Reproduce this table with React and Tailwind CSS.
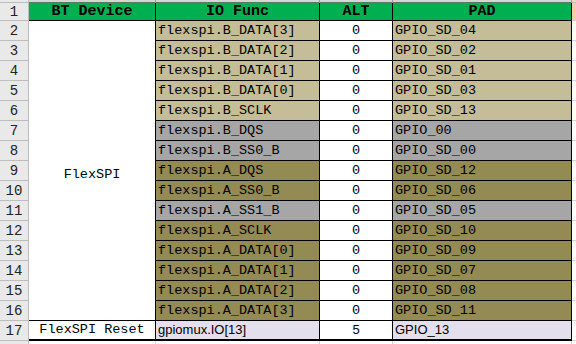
const TAN = "bg-[#c4bd97]";
const GRAY = "bg-[#a6a6a6]";
const OLIVE = "bg-[#948a54]";

const rows = [
  { fn: "flexspi.B_DATA[3]", pad: "GPIO_SD_04", bg: TAN },
  { fn: "flexspi.B_DATA[2]", pad: "GPIO_SD_02", bg: TAN },
  { fn: "flexspi.B_DATA[1]", pad: "GPIO_SD_01", bg: TAN },
  { fn: "flexspi.B_DATA[0]", pad: "GPIO_SD_03", bg: TAN },
  { fn: "flexspi.B_SCLK", pad: "GPIO_SD_13", bg: TAN },
  { fn: "flexspi.B_DQS", pad: "GPIO_00", bg: GRAY },
  { fn: "flexspi.B_SS0_B", pad: "GPIO_SD_00", bg: GRAY },
  { fn: "flexspi.A_DQS", pad: "GPIO_SD_12", bg: OLIVE },
  { fn: "flexspi.A_SS0_B", pad: "GPIO_SD_06", bg: OLIVE },
  { fn: "flexspi.A_SS1_B", pad: "GPIO_SD_05", bg: GRAY },
  { fn: "flexspi.A_SCLK", pad: "GPIO_SD_10", bg: OLIVE },
  { fn: "flexspi.A_DATA[0]", pad: "GPIO_SD_09", bg: OLIVE },
  { fn: "flexspi.A_DATA[1]", pad: "GPIO_SD_07", bg: OLIVE },
  { fn: "flexspi.A_DATA[2]", pad: "GPIO_SD_08", bg: OLIVE },
  { fn: "flexspi.A_DATA[3]", pad: "GPIO_SD_11", bg: OLIVE },
];

const mono = "font-['Liberation_Mono',monospace]";
const sans = "font-['Liberation_Sans',Arial,sans-serif]";

const RowHead = ({ n }) => (
  <div
    className={`flex items-center justify-center border-r border-b border-[#bdbdbd] bg-[#e9e9e9] text-[14px] leading-none text-[#222] ${mono}`}
  >
    {n}
  </div>
);

const Cell = ({ children, className = "" }) => (
  <div
    className={`flex items-end overflow-hidden whitespace-nowrap border-r border-b border-black pb-[1px] text-[13.5px] leading-[16px] text-black ${className}`}
  >
    {children}
  </div>
);

export default function App() {
  const first = rows[0];
  return (
    <div className="h-[344px] w-[576px] overflow-hidden bg-white">
      <div className="grid grid-cols-[29px_127px_164px_73px_179px_4px] grid-rows-[3px_18px_repeat(16,20px)_3px]">
        {/* column header strip */}
        <div className="border-r border-b border-[#bdbdbd] bg-[#e9e9e9]" />
        <div className="border-r border-b border-r-[#9a9a9a] border-b-[#4f7d60] bg-[#d6d6d6]" />
        <div className="border-r border-b border-r-[#9a9a9a] border-b-[#4f7d60] bg-[#d6d6d6]" />
        <div className="border-r border-b border-r-[#9a9a9a] border-b-[#4f7d60] bg-[#d6d6d6]" />
        <div className="border-r border-b border-r-[#9a9a9a] border-b-[#4f7d60] bg-[#d6d6d6]" />
        <div className="border-b border-[#bdbdbd] bg-[#f2d6c2]" />

        {/* row 1 */}
        <RowHead n={1} />
        {["BT Device", "IO Func", "ALT", "PAD"].map((h) => (
          <div
            key={h}
            className={`flex items-center justify-center border-r border-b border-black bg-[#00b050] text-[15px] font-bold leading-none text-black ${mono}`}
          >
            {h}
          </div>
        ))}
        <div className="border-b border-[#d0d0d0] bg-[#f8cbad]" />

        {/* row 2, with the merged FlexSPI cell */}
        <RowHead n={2} />
        <div
          className={`row-span-15 flex items-center justify-center border-r border-b border-black bg-white pt-[10px] text-[13.5px] text-black ${mono}`}
        >
          FlexSPI
        </div>
        <Cell className={`${first.bg} pl-[2px] ${mono}`}>{first.fn}</Cell>
        <Cell className={`justify-center bg-white ${mono}`}>0</Cell>
        <Cell className={`${first.bg} pl-[2px] ${mono}`}>{first.pad}</Cell>
        <div className="border-b border-[#d4d4d4]" />

        {/* rows 3-16 */}
        {rows.slice(1).map((r, i) => (
          <div key={r.fn} className="contents">
            <RowHead n={i + 3} />
            <Cell className={`${r.bg} pl-[2px] ${mono}`}>{r.fn}</Cell>
            <Cell className={`justify-center bg-white ${mono}`}>0</Cell>
            <Cell className={`${r.bg} pl-[2px] ${mono}`}>{r.pad}</Cell>
            <div className="border-b border-[#d4d4d4]" />
          </div>
        ))}

        {/* row 17 */}
        <RowHead n={17} />
        <Cell className={`justify-center border-b-2 bg-white ${mono}`}>
          FlexSPI Reset
        </Cell>
        <Cell className={`border-b-2 bg-[#e4dfec] pl-[2px] text-[13px] ${sans}`}>
          gpiomux.IO[13]
        </Cell>
        <Cell className={`justify-center border-b-2 bg-white text-[13px] ${sans}`}>
          5
        </Cell>
        <Cell className={`border-b-2 bg-[#e4dfec] pl-[2px] text-[13px] ${sans}`}>
          GPIO_13
        </Cell>
        <div className="border-b border-[#d4d4d4]" />

        {/* row 18 top */}
        <div className="border-r border-[#bdbdbd] bg-[#e9e9e9]" />
        <div className="border-r border-[#d4d4d4]" />
        <div className="border-r border-[#d4d4d4]" />
        <div className="border-r border-[#d4d4d4]" />
        <div className="border-r border-[#d4d4d4]" />
        <div />
      </div>
    </div>
  );
}
